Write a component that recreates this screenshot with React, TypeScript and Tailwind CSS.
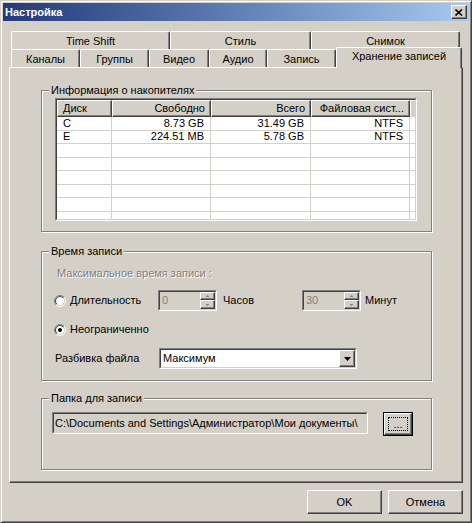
import React from "react";

const raised =
  "border border-t-white border-l-white border-r-[#404040] border-b-[#404040] shadow-[inset_-1px_-1px_0_#808080] bg-[#d4d0c8]";

function Sunken({ className, inner, children }: { className: string; inner: string; children?: React.ReactNode }) {
  return (
    <div className={`border border-t-[#808080] border-l-[#808080] border-r-white border-b-white ${className}`}>
      <div className={`h-full border border-t-[#404040] border-l-[#404040] border-r-[#d4d0c8] border-b-[#d4d0c8] ${inner}`}>
        {children}
      </div>
    </div>
  );
}

function GroupBox({ title, className, children }: { title: string; className: string; children?: React.ReactNode }) {
  return (
    <div className={`relative ml-[31px] w-[391px] border border-[#808080] shadow-[inset_1px_1px_0_#fff,1px_1px_0_#fff] ${className}`}>
      <span className="absolute -top-[7px] left-[7px] bg-[#d4d0c8] px-[2px] leading-[13px]">{title}</span>
      {children}
    </div>
  );
}

function Tab({ label, w, selected }: { label: string; w: string; selected?: boolean }) {
  return (
    <div
      className={`flex items-center justify-center rounded-t-[2px] border-t border-l border-r border-t-white border-l-white border-r-[#404040] bg-[#d4d0c8] shadow-[inset_-1px_0_0_#808080] ${w} ${
        selected ? "relative z-10 -mt-[2px] h-[21px] pb-[3px]" : "h-[18px] pt-[1px]"
      }`}
    >
      {label}
    </div>
  );
}

function Radio({ checked }: { checked?: boolean }) {
  const id = checked ? "rc" : "ru";
  return (
    <svg width="12" height="12" viewBox="0 0 12 12" className="shrink-0">
      <defs>
        <linearGradient id={`${id}o`} x1="0" y1="0" x2="1" y2="1">
          <stop offset="0.5" stopColor="#808080" />
          <stop offset="0.5" stopColor="#ffffff" />
        </linearGradient>
        <linearGradient id={`${id}i`} x1="0" y1="0" x2="1" y2="1">
          <stop offset="0.5" stopColor="#404040" />
          <stop offset="0.5" stopColor="#d4d0c8" />
        </linearGradient>
      </defs>
      <circle cx="6" cy="6" r="5.5" fill="none" stroke={`url(#${id}o)`} />
      <circle cx="6" cy="6" r="4.5" fill="#fff" stroke={`url(#${id}i)`} />
      {checked && <circle cx="6" cy="6" r="2" fill="#000" />}
    </svg>
  );
}

function Arrow({ up }: { up?: boolean }) {
  return (
    <svg width="5" height="4" viewBox="0 0 5 4">
      <path d={up ? "M0.5 3 L2.5 1 L4.5 3 Z" : "M0.5 1 L2.5 3 L4.5 1 Z"} fill="#808080" />
    </svg>
  );
}

function Spinner({ value }: { value: string }) {
  return (
    <Sunken className="h-[21px] w-[59px] shrink-0" inner="flex bg-[#d4d0c8]">
      <span className="flex-1 pl-[2px] leading-[16px] text-[#808080]">{value}</span>
      <div className="flex w-[15px] flex-col">
        <div className={`flex h-[8px] items-center justify-center ${raised}`}>
          <Arrow up />
        </div>
        <div className={`flex h-[9px] items-center justify-center ${raised}`}>
          <Arrow />
        </div>
      </div>
    </Sunken>
  );
}

const cols = ["w-[55px]", "w-[99px]", "w-[100px]", "w-[99px]"];
const rows = [
  ["C", "8.73 GB", "31.49 GB", "NTFS"],
  ["E", "224.51 MB", "5.78 GB", "NTFS"],
  ["", "", "", ""],
  ["", "", "", ""],
  ["", "", "", ""],
  ["", "", "", ""],
  ["", "", "", ""],
  ["", "", "", ""],
];

export default function App() {
  return (
    <div className="h-[523px] w-[472px] overflow-hidden border border-t-[#d4d0c8] border-l-[#d4d0c8] border-r-[#404040] border-b-[#404040] bg-[#d4d0c8] p-[2px] font-['Liberation_Sans',Arial,sans-serif] text-[11px] leading-[13px] text-black shadow-[inset_1px_1px_0_#fff,inset_-1px_-1px_0_#808080]">
      {/* title bar */}
      <div className="flex h-[18px] items-center justify-between bg-gradient-to-r from-[#24397a] to-[#a6caf0] pl-[2px] pr-[2px]">
        <span className="text-[11px] font-bold text-white">Настройка</span>
        <div className={`flex h-[14px] w-[16px] items-center justify-center ${raised}`}>
          <svg width="8" height="7" viewBox="0 0 8 7">
            <path d="M0.5 0.5 L7 6.5 M7 0.5 L0.5 6.5" stroke="#000" strokeWidth="1.6" />
          </svg>
        </div>
      </div>

      <div className="ml-[6px] mt-[10px] w-[454px]">
        <div className="flex pl-[2px]">
          <Tab label="Time Shift" w="w-[159px]" />
          <Tab label="Стиль" w="w-[141px]" />
          <Tab label="Снимок" w="w-[149px]" />
        </div>
        <div className="flex h-[18px] items-start pl-[2px]">
          <Tab label="Каналы" w="w-[69px]" />
          <Tab label="Группы" w="w-[69px]" />
          <Tab label="Видео" w="w-[60px]" />
          <Tab label="Аудио" w="w-[58px]" />
          <Tab label="Запись" w="w-[69px]" />
          <Tab label="Хранение записей" w="w-[126px]" selected />
        </div>

        {/* panel */}
        <div className="h-[416px] border border-t-white border-l-white border-r-[#404040] border-b-[#404040] pt-[22px] shadow-[inset_-1px_-1px_0_#808080]">
          <GroupBox title="Информация о накопителях" className="h-[142px]">
            <Sunken className="ml-[13px] mt-[7px] h-[123px] w-[362px]" inner="overflow-hidden bg-white">
              <div className="flex h-[17px] bg-[#d4d0c8]">
                {["Диск", "Свободно", "Всего", "Файловая сист..."].map((h, i) => (
                  <div
                    key={h}
                    className={`flex items-center border border-t-white border-l-white border-r-[#404040] border-b-[#404040] shadow-[inset_-1px_-1px_0_#808080] ${cols[i]} ${
                      i === 0 ? "pl-[5px]" : "justify-end pr-[5px]"
                    }`}
                  >
                    {h}
                  </div>
                ))}
                <div className="flex-1 border-t border-l border-t-white border-l-white" />
              </div>
              {rows.map((r, ri) => (
                <div key={ri} className="flex h-[13.5px] border-b border-[#d4d0c8]">
                  {r.map((c, ci) => (
                    <div
                      key={ci}
                      className={`flex items-center border-r border-[#d4d0c8] ${cols[ci]} ${
                        ci === 0 ? "pl-[6px]" : "justify-end pr-[6px]"
                      }`}
                    >
                      {c}
                    </div>
                  ))}
                </div>
              ))}
            </Sunken>
          </GroupBox>

          <GroupBox title="Время записи" className="mt-[19px] h-[130px]">
            <div className="ml-[15px] mt-[15px] text-[#808080] [text-shadow:1px_1px_0_#fff]">
              Максимальное время записи :
            </div>
            <div className="ml-[12px] mt-[10px] flex h-[21px] items-center">
              <Radio />
              <span className="ml-[4px] w-[88px]">Длительность</span>
              <Spinner value="0" />
              <span className="ml-[6px] w-[79px]">Часов</span>
              <Spinner value="30" />
              <span className="ml-[4px]">Минут</span>
            </div>
            <div className="ml-[12px] mt-[8px] flex h-[21px] items-center">
              <Radio checked />
              <span className="ml-[4px]">Неограниченно</span>
            </div>
            <div className="ml-[13px] mt-[8px] flex h-[21px] items-center">
              <span className="w-[104px]">Разбивка файла</span>
              <Sunken className="h-[21px] w-[198px]" inner="flex items-center bg-white">
                <span className="flex-1 pl-[2px]">Максимум</span>
                <div className={`flex h-[17px] w-[16px] items-center justify-center ${raised}`}>
                  <svg width="7" height="4" viewBox="0 0 7 4">
                    <path d="M0 0 L7 0 L3.5 4 Z" fill="#000" />
                  </svg>
                </div>
              </Sunken>
            </div>
          </GroupBox>

          <GroupBox title="Папка для записи" className="mt-[17px] h-[72px]">
            <div className="ml-[10px] mt-[13px] flex items-start">
              <Sunken className="h-[22px] w-[316px]" inner="flex items-center bg-[#d4d0c8] pl-[1px]">
                <span className="whitespace-nowrap">C:\Documents and Settings\Администратор\Мои документы\</span>
              </Sunken>
              <div className="ml-[15px] h-[24px] w-[30px] border border-black">
                <div className={`flex h-full items-center justify-center p-[3px] ${raised}`}>
                  <div className="flex h-full w-full items-center justify-center border border-dotted border-black leading-[10px]">
                    ...
                  </div>
                </div>
              </div>
            </div>
          </GroupBox>
        </div>

        {/* dialog buttons */}
        <div className="mt-[7px] flex justify-end gap-[6px]">
          <div className={`flex h-[24px] w-[75px] items-center justify-center ${raised}`}>OK</div>
          <div className={`flex h-[24px] w-[75px] items-center justify-center ${raised}`}>Отмена</div>
        </div>
      </div>
    </div>
  );
}
